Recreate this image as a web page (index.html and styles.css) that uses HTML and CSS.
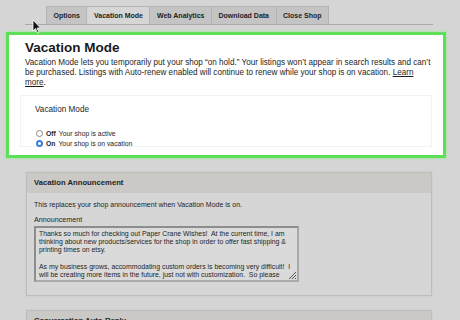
FILE: index.html
```html
<!doctype html>
<html>
<head>
<meta charset="utf-8">
<title>Shop settings</title>
<link rel="stylesheet" href="styles.css">
</head>
<body>

<div class="tabbar">
  <div class="tab">Options</div>
  <div class="tab active">Vacation Mode</div>
  <div class="tab">Web Analytics</div>
  <div class="tab">Download Data</div>
  <div class="tab">Close Shop</div>
</div>

<div class="highlight">
  <h1>Vacation Mode</h1>
  <p class="intro">Vacation Mode lets you temporarily put your shop “on hold.” Your listings won’t appear in search results and can’t be purchased. Listings with Auto-renew enabled will continue to renew while your shop is on vacation. <a href="#">Learn more</a>.</p>
  <div class="section">
    <div class="label">Vacation Mode</div>
    <div class="radios">
      <div class="radio"><span class="dot"></span><b>Off</b> Your shop is active</div>
      <div class="radio"><span class="dot on"></span><b>On</b> Your shop is on vacation</div>
    </div>
  </div>
</div>

<div class="panel">
  <div class="panelHead">Vacation Announcement</div>
  <div class="panelBody">
    <div class="note">This replaces your shop announcement when Vacation Mode is on.</div>
    <div class="fieldLabel">Announcement</div>
    <div class="textarea">
      <p>Thanks so much for checking out Paper Crane Wishes!&nbsp; At the current time, I am thinking about new products/services for the shop in order to offer fast shipping &amp; printing times on etsy.</p>
      <p>As my business grows, accommodating custom orders is becoming very difficult!&nbsp; I will be creating more items in the future, just not with customization.&nbsp; So please</p>
      <svg class="grip" width="9" height="9" viewBox="0 0 9 9"><path d="M8 1L1 8M8 4L4 8M8 7L7 8" stroke="#555" stroke-width="1"/></svg>
    </div>
  </div>
</div>

<div class="panel">
  <div class="panelHead">Conversation Auto-Reply</div>
</div>

<svg class="cursor" width="10" height="15" viewBox="0 0 10 15"><path d="M1 1L1 12L3.5 9.5L5.5 14L7 13.3L5 9L8.5 9Z" fill="#111" stroke="#fff" stroke-width="0.8"/></svg>

</body>
</html>
```

FILE: styles.css
```css
*{
  box-sizing: border-box;
}
body{
  margin: 0;
  background-color: #d5d5d5;
  font-family: "Liberation Sans", Arial, sans-serif;
  color: #1e1e1e;
  position: relative;
  height: 320px;
  overflow: hidden;
}
.tabbar{
  display: flex;
  margin: 0 27px 0 25px;
  padding: 6px 0 0 21px;
  border-bottom: 1px solid #a9a9a9;
}
.tab{
  height: 18px;
  padding: 0 6.5px;
  line-height: 18px;
  font-size: 7px;
  font-weight: bold;
  color: #1e1e1e;
  background-color: #c4c4c4;
  border: 1px solid #b4b4b4;
  border-bottom: none;
  margin-right: -1px;
}
.tab.active{
  background-color: #d6d6d6;
}
.highlight{
  margin: 7px 14px 0 6px;
  height: 126px;
  border: 3px solid #5ddf5a;
  background-color: #fff;
  box-shadow: 0 0 3px #8ef08a;
  padding: 5px 11px 0 16px;
}
h1{
  margin: 0;
  font-size: 13.5px;
  font-weight: bold;
  color: #1a1a1a;
  line-height: 16px;
}
.intro{
  margin: 2px 0 0 0;
  font-size: 8.15px;
  line-height: 10px;
  color: #1e1e1e;
}
.intro a{
  color: #1e1e1e;
}
.section{
  margin: 7px 0 0 -5px;
  border: 1px solid #f2f2f2;
  height: 52px;
  padding: 8px 0 0 14px;
}
.label{
  font-size: 8.2px;
  line-height: 11px;
}
.radios{
  margin: 13px 0 0 1px;
}
.radio{
  display: flex;
  align-items: center;
  font-size: 6.8px;
  height: 10px;
}
.radio b{
  margin-right: 3px;
}
.dot{
  width: 7px;
  height: 7px;
  border-radius: 50%;
  border: 1px solid #888;
  background-color: #fff;
  margin-right: 3px;
}
.dot.on{
  border: 2px solid #3d7fd6;
}
.panel{
  margin: 14px 28px 0 26px;
  border: 1px solid #bdbdbd;
  background-color: #d6d6d6;
  box-shadow: 0 0 2px #c8c8c8;
}
.panelHead{
  height: 20px;
  line-height: 20px;
  padding-left: 7px;
  background-color: #cac9c6;
  font-size: 7.7px;
  font-weight: bold;
  color: #1e1e1e;
}
.panelBody{
  padding: 7px 7px 13px 7px;
}
.note{
  font-size: 7px;
  line-height: 10px;
}
.fieldLabel{
  margin-top: 5px;
  font-size: 7.2px;
  line-height: 10px;
}
.textarea{
  position: relative;
  width: 265px;
  height: 56px;
  margin-top: 1px;
  border: 2px solid #8d8d8d;
  border-right-color: #aaa;
  border-bottom-color: #aaa;
  background-color: #dadada;
  padding: 2px 3px 0 3px;
  overflow: hidden;
}
.textarea p{
  margin: 0 0 9px 0;
  font-size: 6.9px;
  line-height: 8px;
}
.grip{
  position: absolute;
  right: 0;
  bottom: 0;
}
.cursor{
  position: absolute;
  left: 32px;
  top: 19px;
}
```
